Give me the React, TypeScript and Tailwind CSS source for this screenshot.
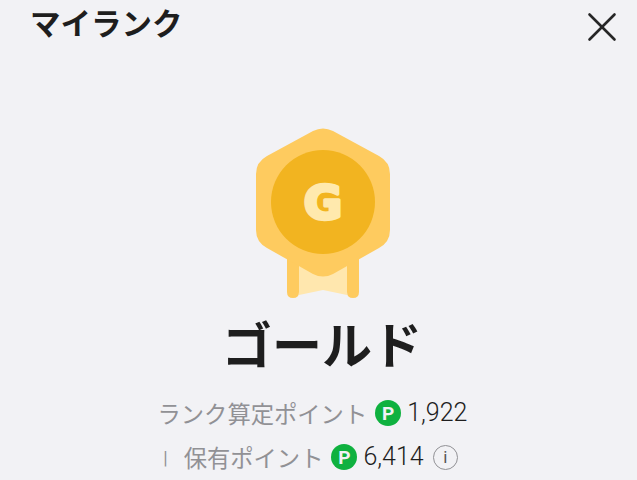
import React from "react";

const jp = "font-['Noto_Sans_CJK_JP','Noto_Sans',sans-serif]";

function RankBadge() {
  return (
    <svg width="136" height="172" viewBox="0 0 136 172" className="block">
      <path d="M32 130 V164 Q32 170 38 170 Q44 170 44 164 V130 Z" fill="#fecb5f" />
      <path d="M92 130 V164 Q92 170 98 170 Q104 170 104 164 V130 Z" fill="#fecb5f" />
      <path d="M44 135 H92 V167 L68 162 L44 167 Z" fill="#ffe7ae" />
      <path
        d="M58 3 Q68 -2 78 3 L124 28 Q135 34 135 46 V102 Q135 114 124 120 L78 146 Q68 151 58 146 L12 120 Q1 114 1 102 V46 Q1 34 12 28 Z"
        fill="#fecb5f"
      />
      <circle cx="68" cy="74" r="52" fill="#f2b420" />
      <text
        x="68"
        y="91"
        textAnchor="middle"
        fontFamily="'DejaVu Sans', sans-serif"
        fontWeight="700"
        fontSize="47"
        fill="#ffe9ad"
        stroke="#ffe9ad"
        strokeWidth="3.5"
        strokeLinejoin="round"
      >
        G
      </text>
    </svg>
  );
}

function PointIcon() {
  return (
    <span className="flex h-[26px] w-[26px] shrink-0 items-center justify-center rounded-full bg-[#0fb13f] font-['Roboto',sans-serif] text-[19px] leading-none font-bold text-[#f2f2f5]">
      P
    </span>
  );
}

function CloseIcon() {
  return (
    <svg width="30" height="30" viewBox="0 0 30 30" fill="none" stroke="#262626" strokeWidth="2.6" strokeLinecap="round">
      <path d="M2.5 2.5 L27.5 27.5" />
      <path d="M27.5 2.5 L2.5 27.5" />
    </svg>
  );
}

export default function App() {
  return (
    <div className={`flex h-[480px] w-[637px] flex-col overflow-hidden bg-[#f2f2f5] text-[#1e1e1e] ${jp}`}>
      <div className="flex h-[128px] items-start justify-between pr-[20px] pl-[30px]">
        <div className="text-[30.5px] leading-[44px] font-bold">マイランク</div>
        <div className="mt-[12px]">
          <CloseIcon />
        </div>
      </div>
      <div className="flex flex-col items-center">
        <div className="ml-[9px]">
          <RankBadge />
        </div>
        <div className="mt-[6px] ml-[7px] text-[50px] leading-[72px] font-bold text-[#1e1e1e]">ゴールド</div>
        <div className="mt-[13px] mr-[12px] flex h-[44px] items-center text-[23.3px] text-[#919195]">
          <span>ランク算定ポイント</span>
          <span className="ml-[8px]">
            <PointIcon />
          </span>
          <span className="ml-[6px] font-['Roboto',sans-serif] text-[25px] font-light text-[#1e1e1e]">1,922</span>
        </div>
        <div className="mr-[16px] flex h-[44px] items-center text-[23.3px] text-[#919195]">
          <span className="mr-[16px] font-['Roboto',sans-serif] text-[18px]">|</span>
          <span>保有ポイント</span>
          <span className="ml-[8px]">
            <PointIcon />
          </span>
          <span className="ml-[6px] font-['Roboto',sans-serif] text-[25px] font-light text-[#1e1e1e]">6,414</span>
          <span className="ml-[9px] flex h-[25px] w-[25px] items-center justify-center rounded-full border border-[#919195] font-['Roboto',sans-serif] text-[17px] leading-none text-[#555]">
            i
          </span>
        </div>
      </div>
    </div>
  );
}
